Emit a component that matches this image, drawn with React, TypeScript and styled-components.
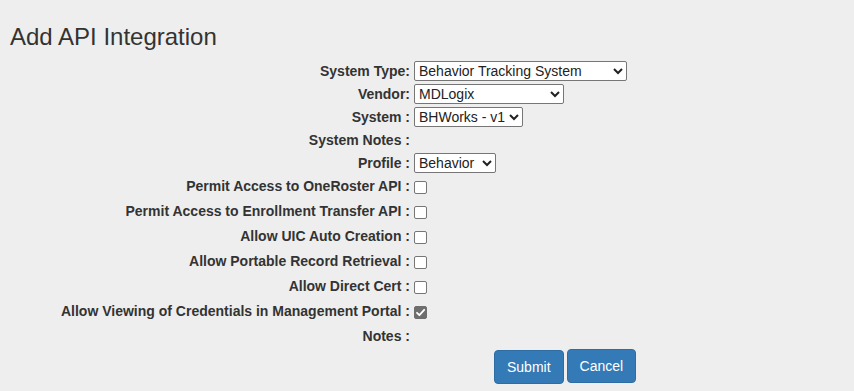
import styled, { createGlobalStyle } from 'styled-components';

const GlobalStyle = createGlobalStyle`
  html, body {
    margin: 0;
    padding: 0;
    background: #eeeeee;
  }
  body {
    font-family: "Liberation Sans", Arial, sans-serif;
    font-size: 14px;
    line-height: 20px;
    color: #333333;
  }
`;

const selectFields = [
  { label: 'System Type:', value: 'Behavior Tracking System', width: 213 },
  { label: 'Vendor:', value: 'MDLogix', width: 150 },
  { label: 'System :', value: 'BHWorks - v1', width: 109 },
];

const checkFields = [
  { label: 'Permit Access to OneRoster API :', checked: false },
  { label: 'Permit Access to Enrollment Transfer API :', checked: false },
  { label: 'Allow UIC Auto Creation :', checked: false },
  { label: 'Allow Portable Record Retrieval :', checked: false },
  { label: 'Allow Direct Cert :', checked: false },
  { label: 'Allow Viewing of Credentials in Management Portal :', checked: true },
];

function CheckBox({ checked }: { checked: boolean }) {
  return (
    <BoxWrap>
      <Box type="checkbox" defaultChecked={checked} disabled={checked} />
      {checked && (
        <Tick viewBox="0 0 13 13" width="13" height="13">
          <path
            d="M3 6.8 L5.4 9.2 L10.2 3.8"
            fill="none"
            stroke="#ffffff"
            strokeWidth="1.8"
            strokeLinecap="round"
            strokeLinejoin="round"
          />
        </Tick>
      )}
    </BoxWrap>
  );
}

function App() {
  return (
    <Page>
      <GlobalStyle />
      <Title>Add API Integration</Title>
      <Form>
        {selectFields.map(f => (
          <Field key={f.label}>
            <Label>{f.label}</Label>
            <Select $width={f.width} defaultValue={f.value}>
              <option>{f.value}</option>
            </Select>
          </Field>
        ))}
        <Field>
          <Label>System Notes :</Label>
          <span />
        </Field>
        <Field>
          <Label>Profile :</Label>
          <Select $width={82} defaultValue="Behavior">
            <option>Behavior</option>
          </Select>
        </Field>
        {checkFields.map(f => (
          <Field key={f.label}>
            <Label>{f.label}</Label>
            <CheckCell>
              <CheckBox checked={f.checked} />
            </CheckCell>
          </Field>
        ))}
        <Field>
          <Label>Notes :</Label>
          <span />
        </Field>
        <Field>
          <span />
          <Actions>
            <Button $offset={1}>Submit</Button>
            <Button>Cancel</Button>
          </Actions>
        </Field>
      </Form>
    </Page>
  );
}

const Page = styled.div`
  padding: 24px 10px 0;
`;

const Title = styled.h3`
  margin: 0;
  font-size: 24px;
  font-weight: 500;
  line-height: 26.4px;
  color: #333333;
`;

const Form = styled.div`
  display: grid;
  grid-template-columns: 400px 1fr;
  column-gap: 4px;
  row-gap: 3px;
  margin-top: 10.6px;
`;

const Field = styled.div`
  display: contents;
`;

const Label = styled.div`
  text-align: right;
  font-weight: bold;
  line-height: 20px;
  white-space: nowrap;
`;

const Select = styled.select<{ $width: number }>`
  width: ${p => p.$width}px;
  height: 20px;
  margin: 0;
  font-family: "Liberation Sans", Arial, sans-serif;
  font-size: 14px;
  color: #222222;
  background: #ffffff;
  border: 1px solid #767676;
  border-radius: 2px;
  justify-self: start;
`;

const CheckCell = styled.div`
  display: flex;
  align-items: flex-start;
  padding: 5px 0 4px;
`;

const BoxWrap = styled.span`
  position: relative;
  display: block;
  width: 13px;
  height: 13px;
`;

const Box = styled.input`
  appearance: none;
  display: block;
  box-sizing: border-box;
  width: 13px;
  height: 13px;
  margin: 0;
  background: #ffffff;
  border: 1px solid #767676;
  border-radius: 2px;

  &:checked {
    background: #6e6e6e;
    border-color: #6e6e6e;
  }
`;

const Tick = styled.svg`
  position: absolute;
  left: 0;
  top: 0;
  pointer-events: none;
`;

const Actions = styled.div`
  display: flex;
  align-items: flex-start;
  gap: 3px;
  padding-left: 80px;
`;

const Button = styled.button<{ $offset?: number }>`
  margin-top: ${p => p.$offset ?? 0}px;
  padding: 6px 12px;
  font-family: "Liberation Sans", Arial, sans-serif;
  font-size: 14px;
  line-height: 20px;
  color: #ffffff;
  background: #337ab7;
  border: 1px solid #2e6da4;
  border-radius: 4px;
  cursor: pointer;
`;

export default App;
